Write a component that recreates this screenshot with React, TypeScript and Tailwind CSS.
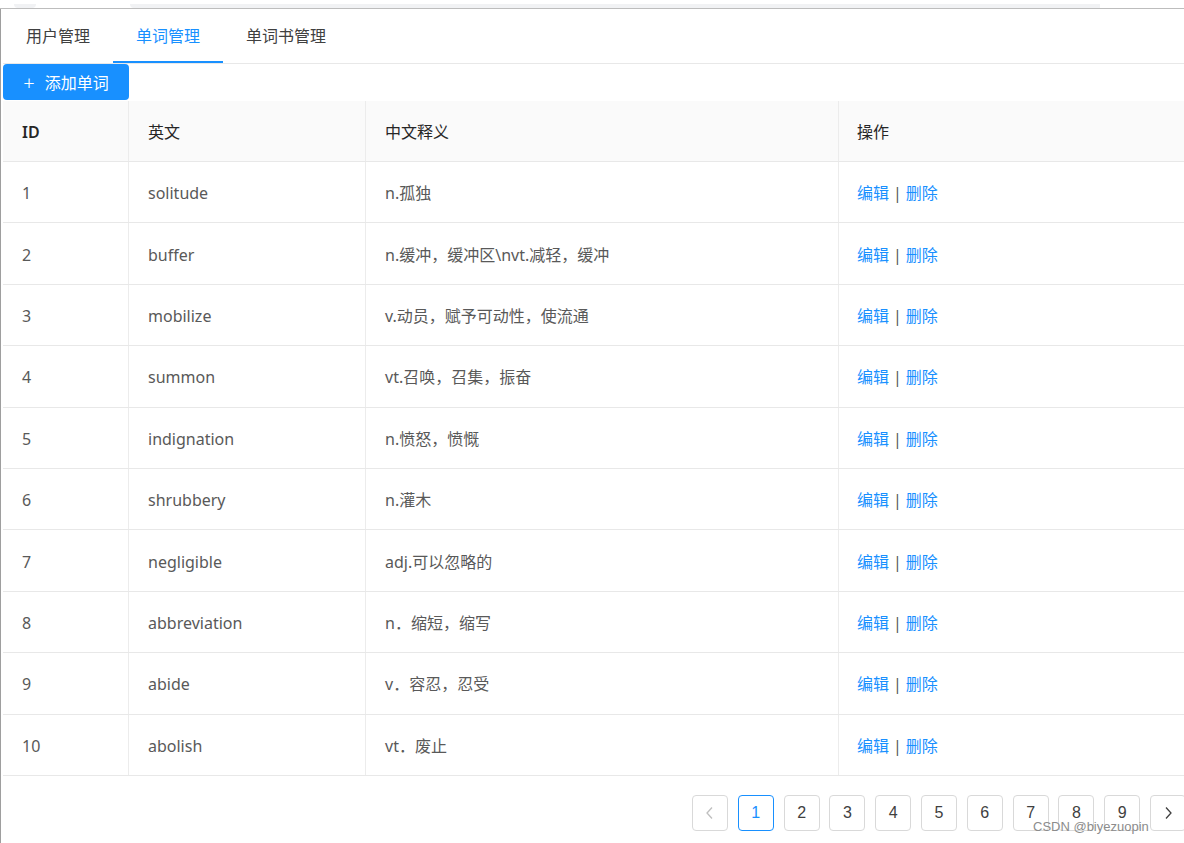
import React from "react";

const rows: [number, string, string][] = [
  [1, "solitude", "n.孤独"],
  [2, "buffer", "n.缓冲，缓冲区\\nvt.减轻，缓冲"],
  [3, "mobilize", "v.动员，赋予可动性，使流通"],
  [4, "summon", "vt.召唤，召集，振奋"],
  [5, "indignation", "n.愤怒，愤慨"],
  [6, "shrubbery", "n.灌木"],
  [7, "negligible", "adj.可以忽略的"],
  [8, "abbreviation", "n．缩短，缩写"],
  [9, "abide", "v．容忍，忍受"],
  [10, "abolish", "vt．废止"],
];

const tabs = ["用户管理", "单词管理", "单词书管理"];

export default function App() {
  return (
    <div
      className="relative flex h-[843px] w-[1184px] flex-col overflow-hidden bg-white"
      style={{ fontFamily: '"Noto Sans", "Noto Sans CJK SC", sans-serif' }}
    >
      {/* browser chrome remnant */}
      <div className="flex h-[8px] items-end bg-white">
        <div className="ml-[14px] h-[4px] w-[22px] rounded-b-full bg-[#f1f2f4]" />
        <div className="ml-[94px] h-[4px] w-[970px] rounded-bl-[6px] bg-[#f1f2f4]" />
      </div>
      <div className="h-px bg-[#bdbdbd]" />

      <div className="flex flex-1 border-l border-[#9e9e9e] pl-[2px]">
        <div className="flex-1">
          {/* tabs */}
          <div className="flex h-[55px] border-b border-[#e8e8e8]">
            {tabs.map((t, i) => (
              <div
                key={t}
                className={`flex items-center border-b-2 px-[23px] pt-[2px] text-[16px] ${
                  i === 1 ? "border-[#1890ff] text-[#1890ff]" : "border-transparent text-[#404040]"
                }`}
              >
                {t}
              </div>
            ))}
          </div>

          {/* add button */}
          <div className="flex">
            <button className="flex h-[36px] w-[126px] items-center justify-center gap-[10px] rounded-[4px] bg-[#1890ff] pt-px text-[16px] text-white">
              <span className="text-[20px] font-light leading-none">+</span>
              <span>添加单词</span>
            </button>
          </div>

          {/* table */}
          <div className="mt-px">
            <div className="grid h-[61px] grid-cols-[125px_237px_473px_1fr] border-b border-[#e8e8e8] bg-[#fafafa] text-[16px] text-[#262626]">
              <div className="flex items-center pl-[19px] pt-px font-semibold">ID</div>
              <div className="flex items-center border-l border-[#ececec] pl-[19px] pt-px">英文</div>
              <div className="flex items-center border-l border-[#ececec] pl-[19px] pt-px">中文释义</div>
              <div className="flex items-center border-l border-[#ececec] pl-[18px] pt-px">操作</div>
            </div>
            {rows.map(([id, en, zh]) => (
              <div
                key={id}
                className="grid h-[61.4px] grid-cols-[125px_237px_473px_1fr] border-b border-[#e8e8e8] text-[16px] text-[#595959]"
              >
                <div className="flex items-center pl-[19px] pt-[2px]">{id}</div>
                <div className="flex items-center border-l border-[#ececec] pl-[19px] pt-[2px]">{en}</div>
                <div className="flex items-center border-l border-[#ececec] pl-[19px] pt-[2px]">{zh}</div>
                <div className="flex items-center border-l border-[#ececec] pl-[18px] pt-[2px]">
                  <span className="text-[#1890ff]">编辑</span>
                  <span className="mx-[4px] text-[#595959]">|</span>
                  <span className="text-[#1890ff]">删除</span>
                </div>
              </div>
            ))}
          </div>

          {/* pagination */}
          <div className="mt-[19px] flex justify-start gap-[9.8px] pl-[689px]">
            <div className="flex h-[36px] w-[36px] shrink-0 items-center justify-center rounded-[4px] border border-[#d9d9d9] text-[#bfbfbf]">
              <svg width="10" height="14" viewBox="0 0 10 14" fill="none" stroke="currentColor" strokeWidth="1.3">
                <path d="M7 1.5 L2 7 L7 12.5" />
              </svg>
            </div>
            {[1, 2, 3, 4, 5, 6, 7, 8, 9].map((n) => (
              <div
                key={n}
                className={`flex h-[36px] w-[36px] shrink-0 items-center justify-center rounded-[4px] border text-[16px] ${
                  n === 1 ? "border-[#1890ff] text-[#1890ff]" : "border-[#d9d9d9] text-[#404040]"
                }`}
                style={{ fontFamily: '"Liberation Sans", Arial, sans-serif' }}
              >
                {n}
              </div>
            ))}
            <div className="flex h-[36px] w-[36px] shrink-0 items-center justify-center rounded-[4px] border border-[#d9d9d9] text-[#404040]">
              <svg width="10" height="14" viewBox="0 0 10 14" fill="none" stroke="currentColor" strokeWidth="1.3">
                <path d="M3 1.5 L8 7 L3 12.5" />
              </svg>
            </div>
          </div>
        </div>
      </div>

      {/* watermark */}
      <div
        className="absolute left-[1033px] top-[817px] text-[13px] text-[#8c8c8c]"
        style={{ fontFamily: '"Liberation Sans", Arial, sans-serif' }}
      >
        CSDN @biyezuopin
      </div>
    </div>
  );
}
